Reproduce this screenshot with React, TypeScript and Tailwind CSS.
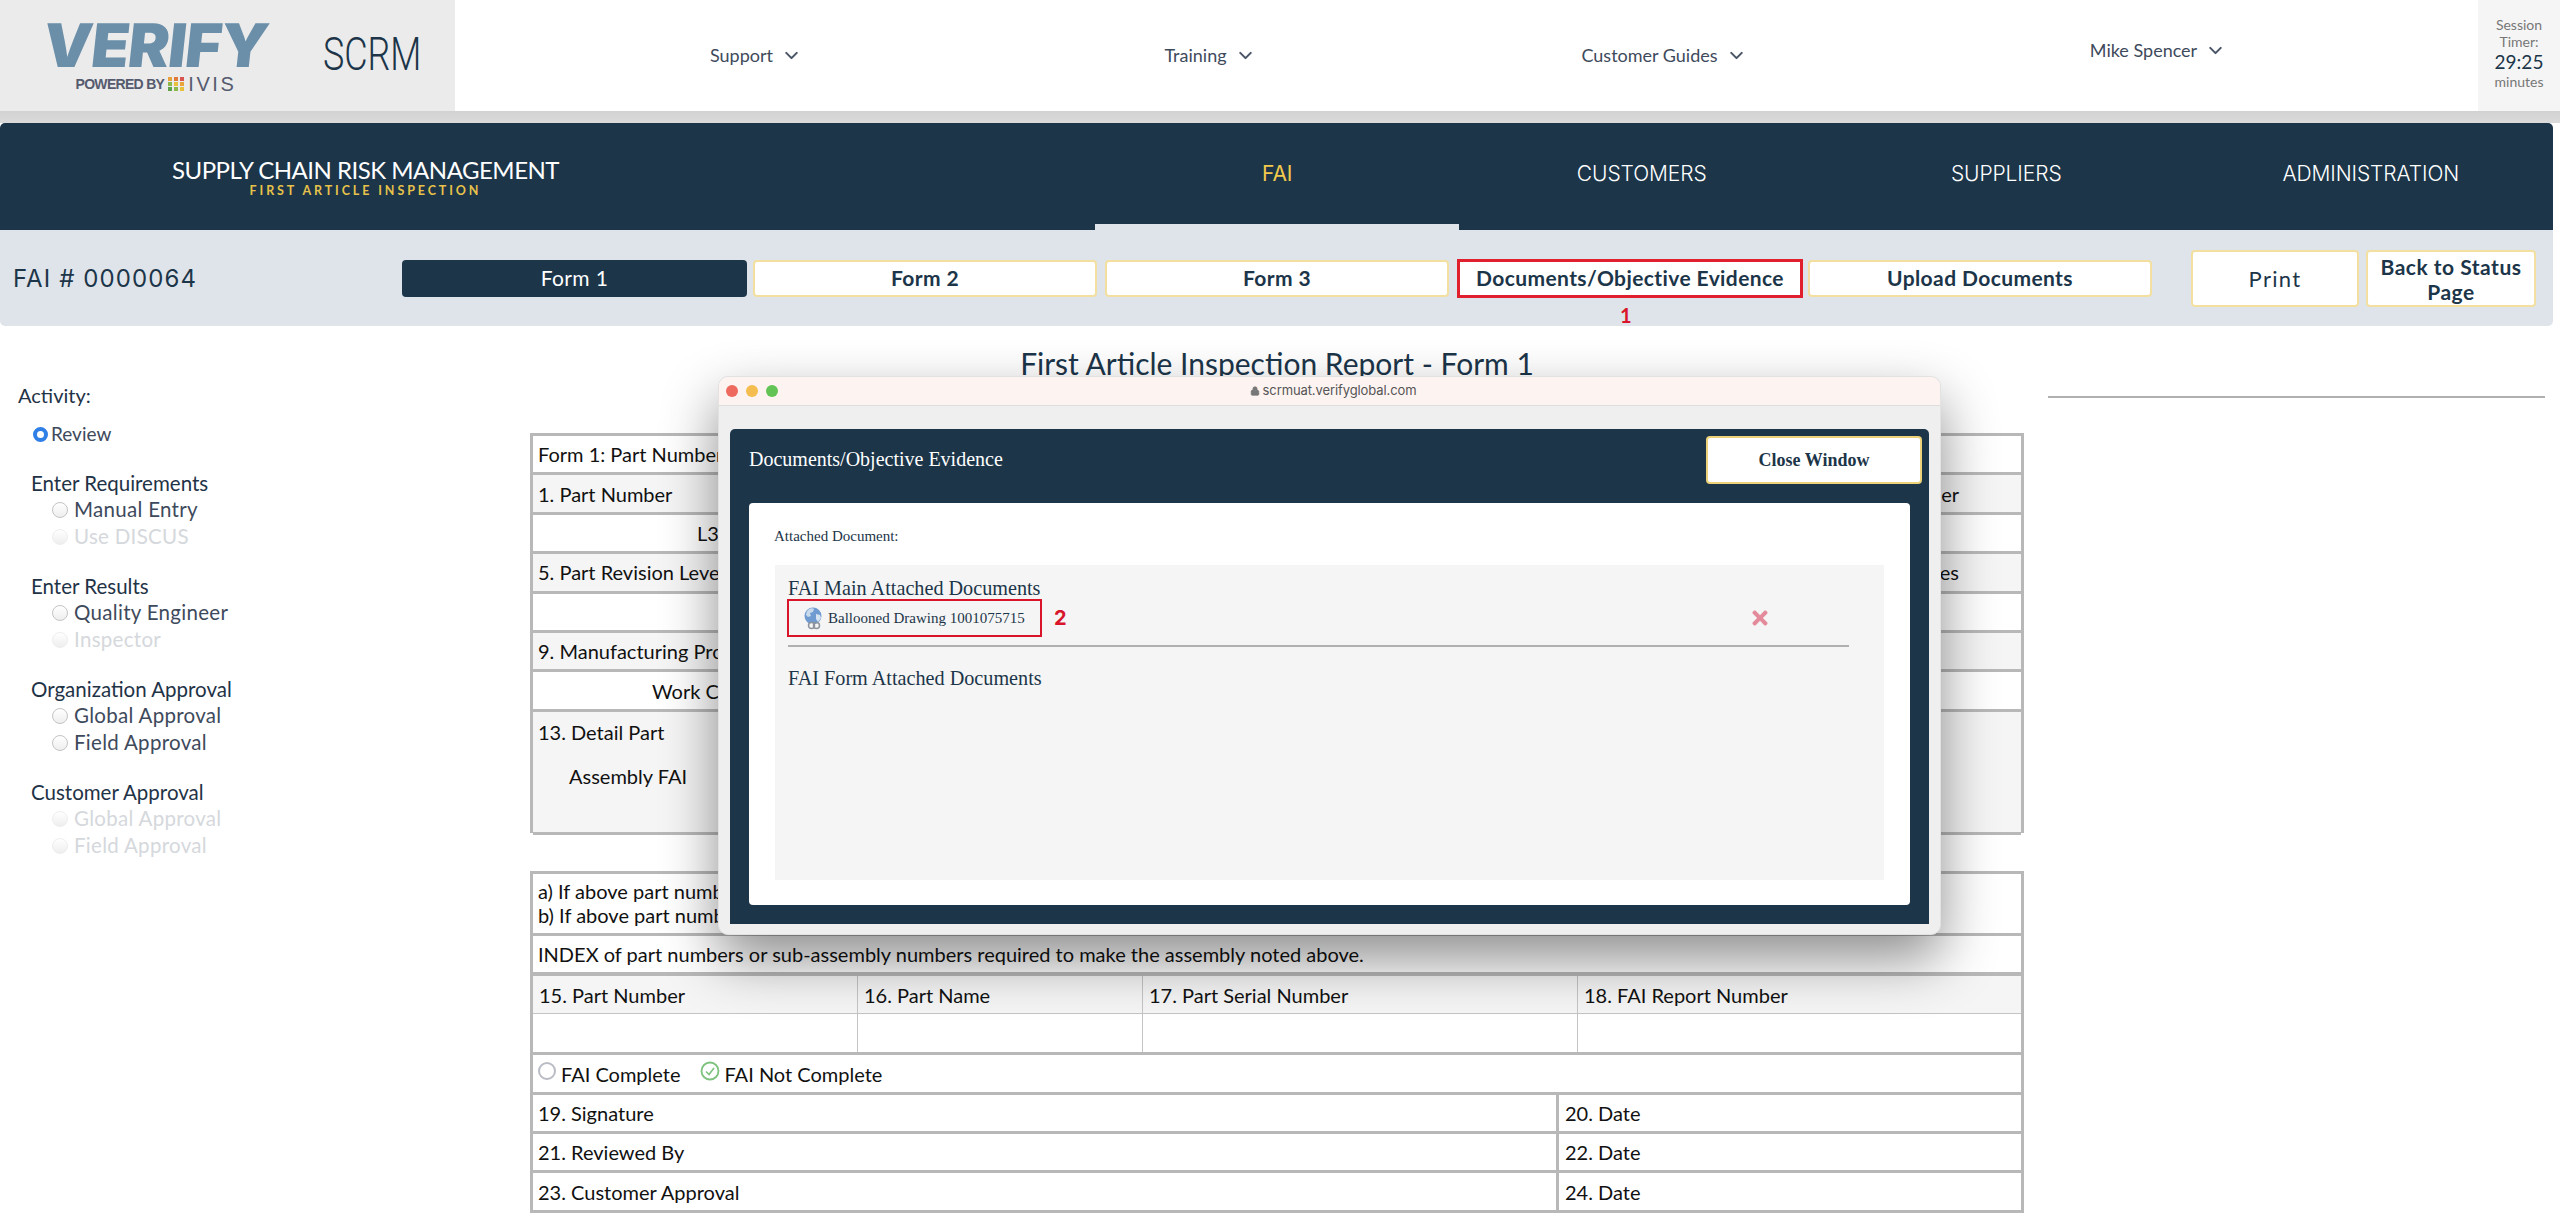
import { ChevronDown, Lock } from 'lucide-react';
import { FaTimes } from 'react-icons/fa';

const lato = { fontFamily: 'Lato, sans-serif' };

const TopMenu = ({ label, className }: { label: string; className: string }) => (
  <div className={`flex items-center justify-center gap-[8px] text-[18px] text-[#3e4a5c] ${className}`}>
    <span>{label}</span>
    <ChevronDown size={21} strokeWidth={2.4} className="text-[#4a5568]" />
  </div>
);

const NavItem = ({ label, active }: { label: string; active?: boolean }) => (
  <div className={`w-[364.5px] flex items-center justify-center pb-[5px] font-['Inter',sans-serif] text-[21px] tracking-[-0.1px] ${active ? 'font-normal text-[#f2c94c]' : 'font-light text-white'}`}>
    {label}
  </div>
);

const FormTab = ({ label, className }: { label: string; className: string }) => (
  <div className={`h-[37px] rounded-[4px] bg-white border-2 border-[#f3e0a0] flex items-center justify-center text-[21px] tracking-[0.4px] font-bold text-[#1c3549] ${className}`}>
    {label}
  </div>
);

const Radio = ({ faded }: { faded?: boolean }) => (
  <span className={`w-[16px] h-[16px] rounded-full border bg-gradient-to-b from-white to-[#eeeeee] ${faded ? 'border-[#eeeeee]' : 'border-[#c4c4c4]'}`} />
);

const Option = ({ label, faded }: { label: string; faded?: boolean }) => (
  <div className={`flex items-center gap-[6px] pl-[21px] text-[20.5px] tracking-[0.3px] h-[27px] ${faded ? 'text-[#d5d8dc]' : 'text-[#3e4a5c]'}`}>
    <Radio faded={faded} />
    <span>{label}</span>
  </div>
);

const Heading = ({ label }: { label: string }) => (
  <div className="mt-[23px] text-[20.5px] leading-[26px] text-[#1f3347]">{label}</div>
);

const Row = ({ children, shaded, className }: { children?: React.ReactNode; shaded?: boolean; className?: string }) => (
  <div className={`h-[39.4px] box-border border-b-[3px] border-[#b8b8b8] flex items-center pl-[5px] pr-[62px] text-[20px] text-[#111111] ${shaded ? 'bg-[#f5f5f5]' : 'bg-white'} ${className ?? ''}`}>
    {children}
  </div>
);

const SignRow = ({ left, right }: { left: string; right: string }) => (
  <div className="h-[39.3px] box-border border-b-[3px] border-[#b8b8b8] flex items-center text-[20px] text-[#111111]">
    <div className="w-[1023px] pl-[5px]">{left}</div>
    <div className="flex-1 h-full border-l-[3px] border-[#b8b8b8] pl-[6px] flex items-center">{right}</div>
  </div>
);

const Logo = () => (
  <div className="w-[455px] bg-[#ebebeb] flex pl-[43px] pt-[14px]">
    <div className="w-[226px] flex flex-col items-center">
      <span className="font-['Inter',sans-serif] font-black text-[60px] leading-[62px] text-[#6b8fa9] tracking-[-1px] scale-x-[1.03] skew-x-[-6deg]">VERIFY</span>
      <div className="flex items-center h-[20px] -mt-[2px] text-[#555a6e]">
        <span className="font-['Liberation_Sans',sans-serif] font-bold text-[14px] tracking-[-0.7px]">POWERED BY</span>
        <svg width="16" height="15" viewBox="0 0 16 15" className="mx-[4px]">
          <rect x="0" y="0" width="4" height="4" fill="#e8a33c" />
          <rect x="6" y="0" width="4" height="4" fill="#e07a3a" />
          <rect x="12" y="0" width="4" height="4" fill="#d9534f" />
          <rect x="0" y="5" width="4" height="4" fill="#8cb84a" />
          <rect x="6" y="5" width="4" height="4" fill="#e8c13c" />
          <rect x="12" y="5" width="4" height="4" fill="#e8a33c" />
          <rect x="0" y="10" width="4" height="4" fill="#5da34a" />
          <rect x="6" y="10" width="4" height="4" fill="#8cb84a" />
          <rect x="12" y="10" width="4" height="4" fill="#e8c13c" />
        </svg>
        <span className="font-['Liberation_Sans',sans-serif] text-[20px] tracking-[2.6px]">IVIS</span>
      </div>
    </div>
    <span className="ml-[54px] mt-[13px] font-['Roboto',sans-serif] font-light text-[46px] leading-[54px] text-[#1c3549] origin-left scale-x-[0.78]">SCRM</span>
  </div>
);

const GlobeIcon = () => (
  <svg width="19" height="24" viewBox="0 0 19 24">
    <circle cx="9" cy="10" r="8.5" fill="#6f9bd0" />
    <path d="M4 4c2-2 5-2 6-1l-1 3-3 1 1 3-3 1-2-2c0-2 1-4 2-5z" fill="#c9d9ec" />
    <path d="M12 8l4 1 1 3-3 4-2-3z" fill="#d8e4f1" />
    <circle cx="7.5" cy="19.5" r="3" fill="#f5f5f5" stroke="#8c939c" strokeWidth="1.5" />
    <circle cx="12.5" cy="19.5" r="3" fill="none" stroke="#8c939c" strokeWidth="1.5" />
  </svg>
);

const DocumentsWindow = () => (
  <div className="absolute left-[718px] top-[376px] w-[1223px] h-[559px] rounded-[10px] bg-[#efefef] border border-[#e2e2e2] overflow-hidden shadow-[0_24px_55px_rgba(0,0,0,0.45)]">
    <div className="h-[29px] box-border bg-[#fdf4f2] border-b border-[#dddddd] flex items-center relative">
      <div className="flex gap-[8px] pl-[7px]">
        <span className="w-[12px] h-[12px] rounded-full bg-[#ee6a5f]" />
        <span className="w-[12px] h-[12px] rounded-full bg-[#f5bd4f]" />
        <span className="w-[12px] h-[12px] rounded-full bg-[#61c454]" />
      </div>
      <div className="flex-1 flex items-center justify-center gap-[3px] text-[13px] tracking-[-0.1px] text-[#555555] pr-[52px] font-['Inter',sans-serif]">
        <Lock size={10} fill="#777777" className="text-[#777777]" />
        <span>scrmuat.verifyglobal.com</span>
      </div>
    </div>
    <div className="ml-[11px] mt-[23px] w-[1199px] h-[495px] bg-[#1c3549] rounded-t-[5px] font-['Liberation_Serif',serif]">
      <div className="h-[74px] flex items-start justify-between pl-[19px] pr-[7px]">
        <span className="mt-[18px] text-[20px] leading-[24px] text-white">Documents/Objective Evidence</span>
        <div className="mt-[7px] w-[216px] h-[48px] box-border bg-white border-2 border-[#eed27a] rounded-[4px] flex items-center justify-center text-[18px] font-bold text-[#1c3549]">
          Close Window
        </div>
      </div>
      <div className="ml-[19px] w-[1161px] h-[402px] bg-white rounded-[4px] pt-[24px]">
        <div className="ml-[25px] text-[15px] leading-[18px] text-[#1c3549]">Attached Document:</div>
        <div className="ml-[26px] mt-[20px] w-[1109px] h-[315px] bg-[#f5f5f5] pl-[13px] pt-[11px] text-[#1c3549]">
          <div className="text-[20.2px] leading-[24px]">FAI Main Attached Documents</div>
          <div className="flex items-center w-[1062px] -ml-[1px] -mt-[1px] pr-[78px]">
            <div className="w-[255px] h-[38px] box-border border-[2px] border-[#d8152a] flex items-center pl-[15px] gap-[5px] text-[15px]">
              <GlobeIcon />
              <span>Ballooned Drawing 1001075715</span>
            </div>
            <span className="ml-[12px] font-['Inter',sans-serif] text-[20px] font-bold text-[#d8152a]">2</span>
            <FaTimes size={22} className="ml-auto text-[#e38b9b]" />
          </div>
          <div className="w-[1061px] h-[2px] mt-[8px] bg-[#b0b0b0]" />
          <div className="mt-[19px] text-[20.2px] leading-[24px]">FAI Form Attached Documents</div>
        </div>
      </div>
    </div>
  </div>
);

const App = () => {
  return (
    <div className="relative w-[2560px] h-[1229px] overflow-hidden bg-white" style={lato}>
      <div className="h-[111px] flex bg-white">
        <Logo />
        <div className="flex-1 flex pl-[74px]">
          <TopMenu label="Support" className="w-[454px]" />
          <TopMenu label="Training" className="w-[454px]" />
          <TopMenu label="Customer Guides" className="w-[454px]" />
          <TopMenu label="Mike Spencer" className="w-[534px] pb-[10px] text-[#1f3347]" />
        </div>
        <div className="w-[82px] bg-[#f5f5f5] flex flex-col items-center pt-[16px] text-[14px] leading-[17px] text-[#777777]">
          <span>Session</span>
          <span>Timer:</span>
          <span className="text-[19px] leading-[23px] text-[#1c3549]">29:25</span>
          <span>minutes</span>
        </div>
      </div>
      <div className="h-[12px] bg-gradient-to-b from-[#d2d2d2] to-[#dadada]" />

      <div className="w-[2553px] h-[107px] bg-[#1c3549] rounded-t-[5px] flex">
        <div className="w-[1095px] pl-[201px] pt-[33px] flex flex-col items-center pr-[565px]">
          <span className="text-[24px] leading-[28px] text-white whitespace-nowrap tracking-[-0.5px]">SUPPLY CHAIN RISK MANAGEMENT</span>
          <span className="text-[12.5px] leading-[13px] text-[#e6c24a] tracking-[2.9px] whitespace-nowrap font-bold">FIRST ARTICLE INSPECTION</span>
        </div>
        <div className="flex-1 flex relative">
          <NavItem label="FAI" active />
          <NavItem label="CUSTOMERS" />
          <NavItem label="SUPPLIERS" />
          <NavItem label="ADMINISTRATION" />
          <div className="absolute left-0 bottom-0 w-[364px] h-[6px] bg-[#dfe4ea]" />
        </div>
      </div>

      <div className="w-[2553px] h-[96px] bg-[#dfe4ea] rounded-b-[5px] flex items-center">
        <div className="w-[402px] pl-[13px] pt-[1px] font-['Inter',sans-serif] text-[24px] tracking-[1.1px] text-[#1c3549]">FAI # 0000064</div>
        <div className="w-[345px] h-[37px] rounded-[4px] bg-[#1c3549] flex items-center justify-center text-[21px] tracking-[0.4px] text-white">Form 1</div>
        <FormTab label="Form 2" className="w-[344px] ml-[6px]" />
        <FormTab label="Form 3" className="w-[344px] ml-[8px]" />
        <div className="relative ml-[8px] w-[346px] h-[39px] box-border bg-white border-[3px] border-[#e0202c] flex items-center justify-center text-[21px] tracking-[0.4px] font-bold text-[#1c3549]">
          Documents/Objective Evidence
          <span className="absolute top-[38px] left-[160px] text-[20px] font-bold text-[#d8152a]">1</span>
        </div>
        <FormTab label="Upload Documents" className="w-[344px] ml-[5px]" />
        <div className="ml-[39px] w-[168px] h-[57px] box-border rounded-[4px] bg-white border-2 border-[#f3e0a0] flex items-center justify-center text-[22px] tracking-[1.3px] text-[#1c3549]">Print</div>
        <div className="ml-[7px] w-[170px] h-[57px] box-border rounded-[4px] bg-white border-2 border-[#f3e0a0] flex items-center justify-center text-center pt-[2px] text-[21px] leading-[25px] tracking-[0.5px] font-bold text-[#1c3549]">Back to Status Page</div>
      </div>

      <div className="flex">
        <div className="w-[530px] pl-[18px] pt-[56px]">
          <div className="text-[20px] leading-[26px] text-[#1f3347]">Activity:</div>
          <div className="flex items-center gap-[3px] pl-[15px] mt-[13px] h-[26px] text-[19px] text-[#3e4a5c]">
            <span className="w-[15px] h-[15px] rounded-full border-[4px] border-[#2f7fe6] bg-white" />
            <span>Review</span>
          </div>
          <div className="pl-[13px]">
            <Heading label="Enter Requirements" />
            <Option label="Manual Entry" />
            <Option label="Use DISCUS" faded />
            <Heading label="Enter Results" />
            <Option label="Quality Engineer" />
            <Option label="Inspector" faded />
            <Heading label="Organization Approval" />
            <Option label="Global Approval" />
            <Option label="Field Approval" />
            <Heading label="Customer Approval" />
            <Option label="Global Approval" faded />
            <Option label="Field Approval" faded />
          </div>
        </div>

        <div className="w-[1494px]">
          <div className="h-[107px] pt-[17px] text-center text-[30px] leading-[40px] text-[#1c3549]">First Article Inspection Report - Form 1</div>
          <div className="h-[400px] box-border border-[3px] border-b-0 border-[#b8b8b8]">
            <Row>Form 1: Part Number</Row>
            <Row shaded>
              <span>1. Part Number</span>
              <span className="ml-auto">4. FAI Report Number</span>
            </Row>
            <Row className="pl-[164px]">L3</Row>
            <Row shaded>
              <span>5. Part Revision Level</span>
              <span className="ml-auto">8. Additional Changes</span>
            </Row>
            <Row />
            <Row shaded>9. Manufacturing Process</Row>
            <Row className="pl-[119px]">Work Center</Row>
            <div className="h-[123.5px] box-border border-b-[3px] border-[#b8b8b8] bg-[#f5f5f5] pl-[5px] pt-[7px] text-[20px] leading-[26px] text-[#111111]">
              <div>13. Detail Part</div>
              <div className="mt-[18px] pl-[31px]">Assembly FAI</div>
            </div>
          </div>

          <div className="mt-[38px] box-border border-[3px] border-b-0 border-[#b8b8b8]">
            <div className="h-[62px] box-border border-b-[3px] border-[#b8b8b8] pl-[5px] pt-[5px] text-[20px] leading-[24px] text-[#111111]">
              <div>a) If above part number</div>
              <div>b) If above part number</div>
            </div>
            <Row>INDEX of part numbers or sub-assembly numbers required to make the assembly noted above.</Row>
            <div className="border-b-[3px] border-[#b8b8b8] border-t border-x-0 text-[20px] text-[#111111]">
              <div className="h-[38px] grid grid-cols-[324px_285px_435px_1fr] bg-[#f5f5f5] border-b border-[#c4c4c4]">
                <div className="pl-[6px] flex items-center">15. Part Number</div>
                <div className="pl-[6px] flex items-center border-l border-[#c4c4c4]">16. Part Name</div>
                <div className="pl-[6px] flex items-center border-l border-[#c4c4c4]">17. Part Serial Number</div>
                <div className="pl-[6px] flex items-center border-l border-[#c4c4c4]">18. FAI Report Number</div>
              </div>
              <div className="h-[38px] grid grid-cols-[324px_285px_435px_1fr]">
                <div />
                <div className="border-l border-[#c4c4c4]" />
                <div className="border-l border-[#c4c4c4]" />
                <div className="border-l border-[#c4c4c4]" />
              </div>
            </div>
            <Row className="pr-[0px]">
              <div className="flex items-center">
                <span className="w-[18px] h-[18px] -mt-[5px] mr-[5px] rounded-full border-2 border-[#b9bcc4]" />
                <span>FAI Complete</span>
                <svg width="20" height="20" viewBox="0 0 20 20" className="ml-[20px] mr-[4px] -mt-[5px]">
                  <circle cx="10" cy="10" r="8.5" fill="none" stroke="#7ec27e" strokeWidth="1.8" />
                  <path d="M6 10.5l3 3 5-6.5" fill="none" stroke="#7ec27e" strokeWidth="1.6" />
                </svg>
                <span>FAI Not Complete</span>
              </div>
            </Row>
            <SignRow left="19. Signature" right="20. Date" />
            <SignRow left="21. Reviewed By" right="22. Date" />
            <SignRow left="23. Customer Approval" right="24. Date" />
          </div>
        </div>

        <div className="flex-1 pl-[24px] pr-[15px]">
          <div className="mt-[70px] h-[2px] bg-[#b0b0b0]" />
        </div>
      </div>

      <DocumentsWindow />
    </div>
  );
};

export default App;
